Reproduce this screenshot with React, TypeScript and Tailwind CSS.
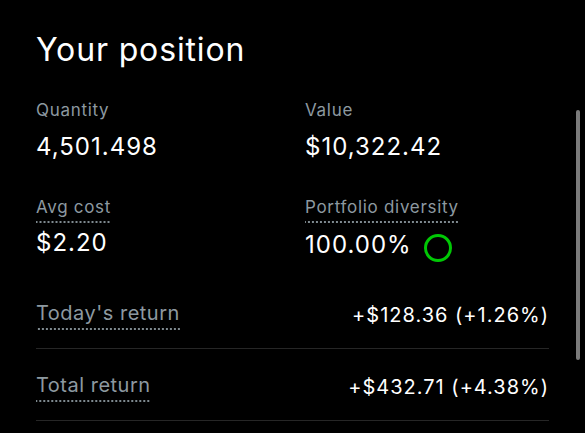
import React from "react";

const dotted =
  "bg-[linear-gradient(to_right,#7f8a90_50%,transparent_50%)] bg-[length:4px_2px] bg-repeat-x bg-bottom";

function Stat({ label, value, dottedLabel, extra }: { label: string; value: string; dottedLabel?: boolean; extra?: React.ReactNode }) {
  return (
    <div className="flex flex-col">
      <div className="flex">
        <span className={`text-[17px] leading-[24px] tracking-[0.7px] text-[#8d99a0] ${dottedLabel ? "pb-[4px] " + dotted : ""}`}>{label}</span>
      </div>
      <div className={`${dottedLabel ? "mt-[4px]" : "mt-[9px]"} flex items-center gap-[11px] text-[24px] leading-[32px] tracking-[1px] text-white`}>
        <span>{value}</span>
        {extra}
      </div>
    </div>
  );
}

function Row({ label, value }: { label: string; value: string }) {
  return (
    <div className="flex items-center justify-between border-b border-[#262626] pt-[22px] pb-[18px]">
      <span className={`text-[20px] leading-[28px] tracking-[0.5px] text-[#8d99a0] pb-[3px] ${dotted}`}>{label}</span>
      <span className="text-[20px] leading-[28px] tracking-[1px] text-white">{value}</span>
    </div>
  );
}

export default function App() {
  return (
    <div
      className="relative w-[585px] h-[433px] overflow-hidden bg-black px-[36px] pt-[30px]"
      style={{ fontFamily: "Inter, 'Noto Sans', sans-serif" }}
    >
      <h1 className="text-[32px] leading-[40px] tracking-[0.85px] text-white">Your position</h1>
      <div className="mt-[28px] grid grid-cols-2 gap-x-[25px] gap-y-[32px]">
        <Stat label="Quantity" value="4,501.498" />
        <Stat label="Value" value="$10,322.42" />
        <Stat label="Avg cost" value="$2.20" dottedLabel />
        <Stat
          label="Portfolio diversity"
          value="100.00%"
          dottedLabel
          extra={
            <svg width="30" height="30" viewBox="0 0 30 30" className="mt-[6px]">
              <circle cx="15" cy="15" r="12.5" fill="none" stroke="#00c805" strokeWidth="3" />
            </svg>
          }
        />
      </div>
      <div className="mt-[14px] flex flex-col">
        <Row label="Today's return" value="+$128.36 (+1.26%)" />
        <Row label="Total return" value="+$432.71 (+4.38%)" />
      </div>
      <div className="absolute right-[5px] top-[110px] h-[250px] w-[4px] rounded-full bg-[#7b7b7b]" />
    </div>
  );
}
